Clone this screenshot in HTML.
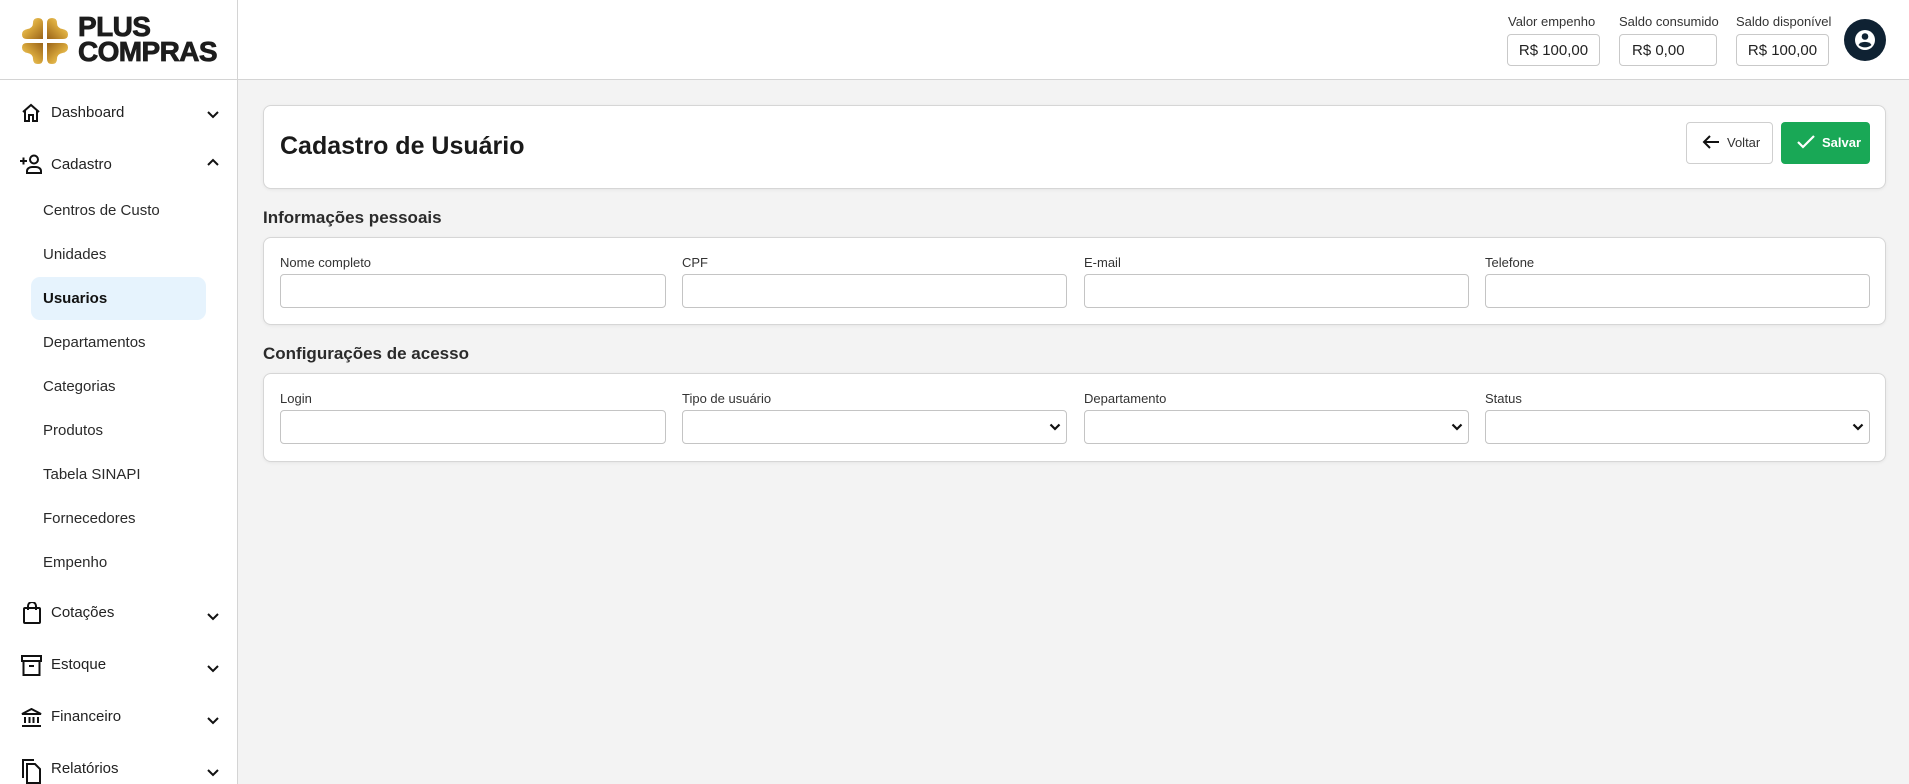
<!DOCTYPE html>
<html><head><meta charset="utf-8"><style>
*{box-sizing:border-box;margin:0;padding:0}
body{width:1909px;height:784px;overflow:hidden;background:#f3f3f3;font-family:"Liberation Sans",sans-serif;color:#1f1f1f;position:relative}
.abs{position:absolute}
#hdr{left:0;top:0;width:1909px;height:80px;background:#fff;border-bottom:1px solid #d4d4d4}
#side{left:0;top:80px;width:238px;height:704px;background:#fff;border-right:1px solid #d4d4d4}
#sideTop{left:237px;top:0;width:1px;height:80px;background:#d4d4d4}
.stat{font-size:13px;color:#333}
.box{border:1px solid #c9c9c9;border-radius:4px;height:32px;font-size:15px;display:flex;align-items:center;justify-content:center;color:#222;background:#fff}
.card{background:#fff;border:1px solid #d6d6d6;border-radius:8px;left:263px;width:1623px;box-shadow:0 1px 3px rgba(0,0,0,.06)}
.lbl{font-size:13px;color:#333}
.inp{border:1px solid #c4c4c4;border-radius:4px;height:34px;background:#fff}
.sec{font-size:17px;font-weight:bold;color:#2b2b2b;left:263px}
.mi{font-size:15px;color:#222;left:51px}
.si{font-size:15px;color:#2a2a2a;left:43px}
.chev{left:206px}
</style></head><body>
<div id="hdr" class="abs"></div>
<div id="sideTop" class="abs"></div>
<div id="side" class="abs"></div>

<!-- logo -->
<svg class="abs" style="left:22px;top:18px" width="46" height="46" viewBox="0 0 46 46">
<defs><linearGradient id="g" x1="0" y1="0" x2="1" y2="1"><stop offset="0" stop-color="#f6dc85"/><stop offset=".45" stop-color="#d9a83c"/><stop offset="1" stop-color="#9a6418"/></linearGradient>
<path id="q" d="M21 21 H5 Q0 21 0 16.5 Q0 12 5.5 11 Q11 10 11 5 Q11 0 16 0 Q21 0 21 5 Z"/></defs>
<g fill="url(#g)">
<use href="#q"/>
<use href="#q" transform="translate(46,0) scale(-1,1)"/>
<use href="#q" transform="translate(0,46) scale(1,-1)"/>
<use href="#q" transform="translate(46,46) scale(-1,-1)"/>
</g>
</svg>
<div class="abs" style="left:78px;top:14px;font-size:28px;font-weight:bold;line-height:25px;letter-spacing:-0.6px;color:#1d1d1d;-webkit-text-stroke:0.8px #1d1d1d">PLUS<br>COMPRAS</div>

<!-- header stats -->
<div class="abs stat" style="left:1508px;top:14px">Valor empenho</div>
<div class="abs box" style="left:1507px;top:34px;width:93px">R$ 100,00</div>
<div class="abs stat" style="left:1619px;top:14px">Saldo consumido</div>
<div class="abs box" style="left:1619px;top:34px;width:98px;justify-content:flex-start;padding-left:12px">R$ 0,00</div>
<div class="abs stat" style="left:1736px;top:14px">Saldo disponível</div>
<div class="abs box" style="left:1736px;top:34px;width:93px">R$ 100,00</div>
<svg class="abs" style="left:1844px;top:19px" width="42" height="42" viewBox="0 0 42 42"><circle cx="21" cy="21" r="21" fill="#0f2233"/><circle cx="21" cy="21" r="10" fill="#fff"/><circle cx="21" cy="17.5" r="3.3" fill="#0f2233"/><path d="M14.5 26 a7 5 0 0 1 13 0 a10 10 0 0 1 -13 0Z" fill="#0f2233"/></svg>

<!-- sidebar -->
<svg class="abs" style="left:21px;top:103px" width="20" height="20" viewBox="0 0 20 20" fill="none" stroke="#111" stroke-width="2"><path d="M2 9 L10 2 L18 9 M4 7.5 V18 H8 V12 H12 V18 H16 V7.5"/></svg>
<div class="abs mi" style="top:104px">Dashboard</div>
<svg class="abs chev" style="top:110px" width="14" height="10" viewBox="0 0 14 10"><path d="M2 2 L7 7 L12 2" fill="none" stroke="#111" stroke-width="2"/></svg>

<svg class="abs" style="left:19px;top:154px" width="24" height="20" viewBox="0 0 24 20" fill="none" stroke="#111" stroke-width="2"><path d="M1 7 H8 M4.5 3.5 V10.5"/><circle cx="15" cy="5.5" r="4"/><path d="M8 19 V17 a5 4 0 0 1 5 -4 h4 a5 4 0 0 1 5 4 V19 Z"/></svg>
<div class="abs mi" style="top:156px">Cadastro</div>
<svg class="abs chev" style="top:157px" width="14" height="10" viewBox="0 0 14 10"><path d="M2 8 L7 3 L12 8" fill="none" stroke="#111" stroke-width="2"/></svg>

<div class="abs si" style="top:202px">Centros de Custo</div>
<div class="abs si" style="top:246px">Unidades</div>
<div class="abs" style="left:31px;top:277px;width:175px;height:43px;background:#e6f3fd;border-radius:9px"></div>
<div class="abs si" style="top:290px;font-weight:bold;color:#111">Usuarios</div>
<div class="abs si" style="top:334px">Departamentos</div>
<div class="abs si" style="top:378px">Categorias</div>
<div class="abs si" style="top:422px">Produtos</div>
<div class="abs si" style="top:466px">Tabela SINAPI</div>
<div class="abs si" style="top:510px">Fornecedores</div>
<div class="abs si" style="top:554px">Empenho</div>

<svg class="abs" style="left:22px;top:602px" width="20" height="22" viewBox="0 0 20 22" fill="none" stroke="#111" stroke-width="2"><rect x="2" y="6" width="16" height="15" rx="1"/><path d="M6 8 V4 a4 4 0 0 1 8 0 V8"/></svg>
<div class="abs mi" style="top:604px">Cotações</div>
<svg class="abs chev" style="top:612px" width="14" height="10" viewBox="0 0 14 10"><path d="M2 2 L7 7 L12 2" fill="none" stroke="#111" stroke-width="2"/></svg>

<svg class="abs" style="left:21px;top:655px" width="21" height="21" viewBox="0 0 21 21" fill="none" stroke="#111" stroke-width="2"><rect x="1" y="1" width="19" height="5"/><path d="M2.5 6 V20 H18.5 V6 M8 11 H13"/></svg>
<div class="abs mi" style="top:656px">Estoque</div>
<svg class="abs chev" style="top:664px" width="14" height="10" viewBox="0 0 14 10"><path d="M2 2 L7 7 L12 2" fill="none" stroke="#111" stroke-width="2"/></svg>

<svg class="abs" style="left:21px;top:708px" width="21" height="19" viewBox="0 0 21 19" fill="none" stroke="#111" stroke-width="2"><path d="M1 6 L10.5 1 L20 6 Z M4 9 V15 M8.5 9 V15 M12.5 9 V15 M17 9 V15 M1 18 H20"/></svg>
<div class="abs mi" style="top:708px">Financeiro</div>
<svg class="abs chev" style="top:716px" width="14" height="10" viewBox="0 0 14 10"><path d="M2 2 L7 7 L12 2" fill="none" stroke="#111" stroke-width="2"/></svg>

<svg class="abs" style="left:21px;top:758px" width="21" height="26" viewBox="0 0 21 26" fill="none" stroke="#111" stroke-width="2"><path d="M2 20 V2 H13"/><path d="M6 6 H14 L19 11 V25 H6 Z"/></svg>
<div class="abs mi" style="top:760px">Relatórios</div>
<svg class="abs chev" style="top:768px" width="14" height="10" viewBox="0 0 14 10"><path d="M2 2 L7 7 L12 2" fill="none" stroke="#111" stroke-width="2"/></svg>

<!-- title card -->
<div class="abs card" style="top:105px;height:84px"></div>
<div class="abs" style="left:280px;top:132px;font-size:25px;font-weight:bold;color:#1a1a1a">Cadastro de Usuário</div>
<div class="abs" style="left:1686px;top:122px;width:87px;height:42px;border:1px solid #cfcfcf;border-radius:4px;background:#fff"></div>
<svg class="abs" style="left:1702px;top:134px" width="18" height="16" viewBox="0 0 18 16"><path d="M17 8 H2 M8 2 L2 8 L8 14" fill="none" stroke="#111" stroke-width="2"/></svg>
<div class="abs" style="left:1727px;top:135px;font-size:13px;color:#333">Voltar</div>
<div class="abs" style="left:1781px;top:122px;width:89px;height:42px;background:#19a856;border-radius:4px"></div>
<svg class="abs" style="left:1796px;top:134px" width="20" height="16" viewBox="0 0 20 16"><path d="M2 8 L7 13 L18 2" fill="none" stroke="#fff" stroke-width="2.2"/></svg>
<div class="abs" style="left:1822px;top:135px;font-size:13px;color:#fff;font-weight:bold">Salvar</div>

<!-- section 1 -->
<div class="abs sec" style="top:208px">Informações pessoais</div>
<div class="abs card" style="top:237px;height:88px"></div>
<div class="abs lbl" style="left:280px;top:255px">Nome completo</div>
<div class="abs inp" style="left:280px;top:274px;width:386px"></div>
<div class="abs lbl" style="left:682px;top:255px">CPF</div>
<div class="abs inp" style="left:682px;top:274px;width:385px"></div>
<div class="abs lbl" style="left:1084px;top:255px">E-mail</div>
<div class="abs inp" style="left:1084px;top:274px;width:385px"></div>
<div class="abs lbl" style="left:1485px;top:255px">Telefone</div>
<div class="abs inp" style="left:1485px;top:274px;width:385px"></div>

<!-- section 2 -->
<div class="abs sec" style="top:344px">Configurações de acesso</div>
<div class="abs card" style="top:373px;height:89px"></div>
<div class="abs lbl" style="left:280px;top:391px">Login</div>
<div class="abs inp" style="left:280px;top:410px;width:386px"></div>
<div class="abs lbl" style="left:682px;top:391px">Tipo de usuário</div>
<div class="abs inp" style="left:682px;top:410px;width:385px"></div>
<div class="abs lbl" style="left:1084px;top:391px">Departamento</div>
<div class="abs inp" style="left:1084px;top:410px;width:385px"></div>
<div class="abs lbl" style="left:1485px;top:391px">Status</div>
<div class="abs inp" style="left:1485px;top:410px;width:385px"></div>
<svg class="abs" style="left:1049px;top:423px" width="12" height="8" viewBox="0 0 12 8"><path d="M1.5 1.5 L6 6 L10.5 1.5" fill="none" stroke="#111" stroke-width="2.2"/></svg>
<svg class="abs" style="left:1451px;top:423px" width="12" height="8" viewBox="0 0 12 8"><path d="M1.5 1.5 L6 6 L10.5 1.5" fill="none" stroke="#111" stroke-width="2.2"/></svg>
<svg class="abs" style="left:1852px;top:423px" width="12" height="8" viewBox="0 0 12 8"><path d="M1.5 1.5 L6 6 L10.5 1.5" fill="none" stroke="#111" stroke-width="2.2"/></svg>
</body></html>
